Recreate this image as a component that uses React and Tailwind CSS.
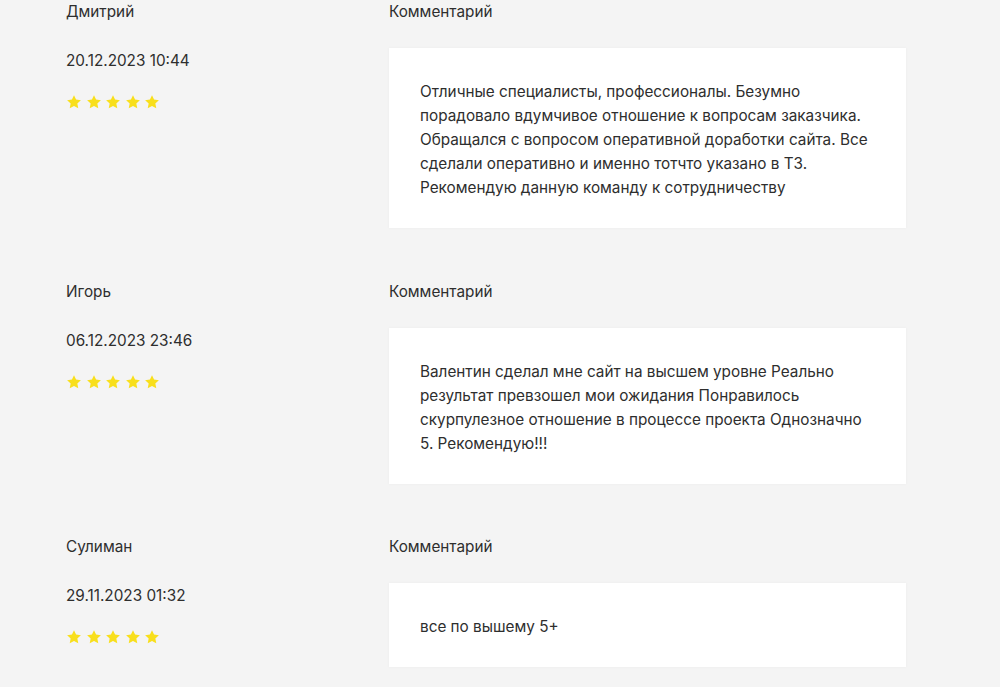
const reviews = [
  {
    name: 'Дмитрий',
    date: '20.12.2023 10:44',
    text: 'Отличные специалисты, профессионалы. Безумно порадовало вдумчивое отношение к вопросам заказчика. Обращался с вопросом оперативной доработки сайта. Все сделали оперативно и именно тотчто указано в ТЗ. Рекомендую данную команду к сотрудничеству',
  },
  {
    name: 'Игорь',
    date: '06.12.2023 23:46',
    text: 'Валентин сделал мне сайт на высшем уровне Реально результат превзошел мои ожидания Понравилось скурпулезное отношение в процессе проекта Однозначно 5. Рекомендую!!!',
  },
  {
    name: 'Сулиман',
    date: '29.11.2023 01:32',
    text: 'все по вышему 5+',
  },
]

function Star() {
  return (
    <svg width="16" height="16" viewBox="0 0 24 24" className="text-[#f8df1c]">
      <path
        fill="currentColor"
        d="M12 1.8l3.1 6.6 7.2.9-5.3 5 1.4 7.1L12 17.9l-6.4 3.5 1.4-7.1-5.3-5 7.2-.9z"
      />
    </svg>
  )
}

function Review({ name, date, text }) {
  return (
    <div className="flex mb-[51.5px]">
      <div className="w-[323px] shrink-0">
        <div className="leading-6">{name}</div>
        <div className="mt-[25px] leading-6">{date}</div>
        <div className="mt-[21px] flex gap-[3.5px]">
          {[0, 1, 2, 3, 4].map(i => <Star key={i} />)}
        </div>
      </div>
      <div className="w-[517px]">
        <div className="leading-6">Комментарий</div>
        <div className="mt-6 bg-white px-[31px] pt-[32px] pb-[28px] leading-6 shadow-[0_0_3px_rgba(0,0,0,0.04)]">
          {text}
        </div>
      </div>
    </div>
  )
}

export default function App() {
  return (
    <div className="min-h-screen bg-[#f4f4f4] text-[#2e2e2e] text-[15.3px] font-['Inter',sans-serif] pl-[66px]">
      {reviews.map(r => <Review key={r.name} {...r} />)}
    </div>
  )
}
